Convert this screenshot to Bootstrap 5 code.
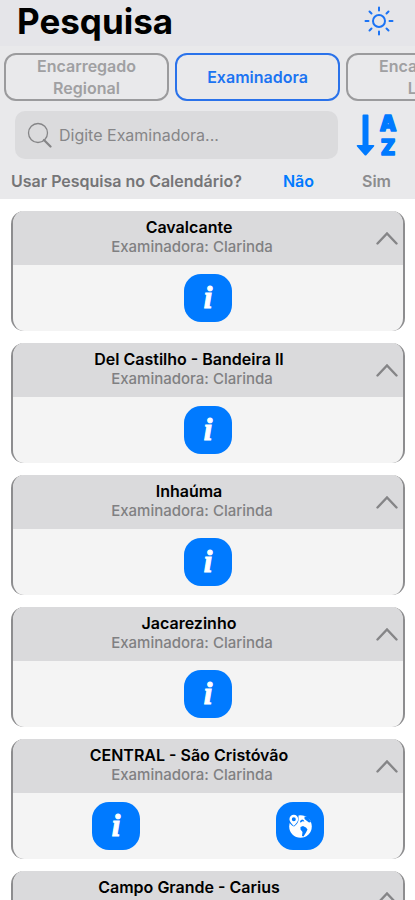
<!DOCTYPE html>
<html lang="pt-BR">
<head>
<meta charset="utf-8">
<meta name="viewport" content="width=device-width, initial-scale=1">
<title>Pesquisa</title>
<link href="https://cdn.jsdelivr.net/npm/bootstrap@5.3.0/dist/css/bootstrap.min.css" rel="stylesheet">
<style>
body { font-family: Inter, "Liberation Sans", sans-serif; background: #fff; color: #000; overflow-x: hidden; }
.app-top { background: #e9e9eb; }
.title-bar { background: #e5e5e9; height: 46px; padding: 0 20px 4px 17px; }
.title-bar h1 { font-size: 35px; line-height: 40px; font-weight: 700; }
.plain-btn { background: none; border: 0; padding: 0; display: flex; color: #007aff; }
.role-tabs { gap: 6px; padding: 7px 4px 0; overflow-x: auto; scrollbar-width: none; }
.role-tabs::-webkit-scrollbar { display: none; }
.role-tab { flex: 0 0 165px; height: 48px; border: 2px solid #9b9b9d; border-radius: 12px; background: transparent; color: #a0a0a2; font-size: 16px; line-height: 22px; font-weight: 600; padding: 0 24px; }
.role-tab.active { border-color: #2a72ea; color: #1c74f2; }
.search-row { padding: 10px 16px 0 15px; gap: 18px; }
.search-box { background: #dbdbdd; border-radius: 10px; height: 48px; padding: 0 12px; gap: 7px; }
.search-box input { border: 0; background: transparent; outline: 0; font-size: 16px; min-width: 0; padding: 0; color: #333; }
.search-box input::placeholder { color: #868688; opacity: 1; }
.calendar-row { padding: 10px 24px 6px 11px; font-size: 16px; line-height: 24px; font-weight: 600; color: #757577; }
.choice { color: #8c8c8e; cursor: pointer; }
.btn-check:checked + .choice { color: #007aff; }
.results { padding: 12px 10px 12px 11px; gap: 12px; }
.place { border: solid #8d8d8f; border-width: 0 2px; border-radius: 13px; background: #f4f4f4; overflow: hidden; }
.place-head { background: #dadadc; height: 54px; }
.place-head h2 { font-size: 16px; line-height: 20px; font-weight: 600; margin: 0; }
.place-head p { font-size: 15px; line-height: 20px; font-weight: 500; color: #808082; margin: 0; padding-left: 6px; }
.place-head-text { padding: 0 0 2px; }
.toggle { width: 38px; padding-right: 5px; justify-content: flex-end; color: #858587; }
.place-body { height: 66px; padding: 0 11px; }
.action { width: 48px; height: 48px; border: 0; border-radius: 17px; background: #007aff; color: #fff; padding: 0; }
.action svg { display: block; margin: 0 auto; }
.info-glyph { display: block; font: italic 700 31px/48px "Liberation Serif", serif; -webkit-text-stroke: 1px #fff; }
</style>
<script src="https://cdn.jsdelivr.net/npm/bootstrap@5.3.0/dist/js/bootstrap.bundle.min.js" defer></script>
</head>
<body>
<header class="app-top">
  <div class="title-bar d-flex align-items-center justify-content-between">
    <h1 class="m-0">Pesquisa</h1>
    <button class="plain-btn" type="button" aria-label="Tema claro">
      <svg width="32" height="32" viewBox="0 0 32 32" fill="none" stroke="#1b73f5" stroke-width="2" stroke-linecap="round">
        <circle cx="16" cy="16" r="6"/>
        <path d="M16 2.500v3M16 26.500v3M2.500 16h3M26.500 16h3M6.500 6.500l2 2M23.500 23.500l2 2M6.500 25.500l2-2M23.500 8.500l2-2"/>
      </svg>
    </button>
  </div>
  <nav class="role-tabs d-flex" aria-label="Tipo de pesquisa">
    <button class="role-tab" type="button">Encarregado Regional</button>
    <button class="role-tab active" type="button">Examinadora</button>
    <button class="role-tab" type="button">Encarregado Local</button>
  </nav>
  <div class="search-row d-flex align-items-center">
    <label class="search-box d-flex align-items-center flex-grow-1">
      <svg class="flex-shrink-0" width="25" height="26" viewBox="0 0 25 26" fill="none" stroke="#858587" stroke-linecap="round">
        <circle cx="11" cy="11" r="9.500" stroke-width="1.300"/>
        <path d="M17 18l6.500 6.500" stroke-width="2.200"/>
      </svg>
      <input class="flex-grow-1" type="text" placeholder="Digite Examinadora..." aria-label="Digite Examinadora">
    </label>
    <button class="plain-btn" type="button" aria-label="Ordenar de A a Z">
      <svg width="43" height="46" viewBox="0 0 43 46" fill="#007aff" overflow="visible">
        <path d="M6.500 3.500q0-1 1-1h4q1 0 1 1V33h5q1.500 0 .5 1.500l-7.500 8.500q-1 1-2 0L1 34.500Q0 33 1.500 33h5z"/>
        <g font-family="Inter, sans-serif" font-weight="900" font-size="21" text-anchor="middle" stroke="#007aff" stroke-width="1.500" stroke-linejoin="round">
          <text x="32" y="19">A</text><text x="32" y="43">Z</text>
        </g>
      </svg>
    </button>
  </div>
  <div class="calendar-row d-flex justify-content-between" role="radiogroup" aria-labelledby="cal-label">
    <span id="cal-label">Usar Pesquisa no Calendário?</span>
    <span class="d-flex gap-5">
      <span><input class="btn-check" type="radio" name="cal" id="cal-nao" checked><label class="choice" for="cal-nao">Não</label></span>
      <span><input class="btn-check" type="radio" name="cal" id="cal-sim"><label class="choice" for="cal-sim">Sim</label></span>
    </span>
  </div>
</header>
<main class="results d-flex flex-column" id="results"></main>

<template id="place-template">
  <article class="place">
    <div class="place-head d-flex">
      <div class="place-head-text flex-grow-1 text-center d-flex flex-column justify-content-center">
        <h2></h2>
        <p>Examinadora: Clarinda</p>
      </div>
      <button class="plain-btn toggle align-items-center" type="button" aria-label="Recolher">
        <svg width="22" height="14" viewBox="0 0 22 14" fill="none" stroke="currentColor" stroke-width="2.400" stroke-linecap="round"><path d="M1.500 12.500L11 2.500l9.500 10"/></svg>
      </button>
    </div>
    <div class="place-body d-flex align-items-center justify-content-around">
      <button class="action" type="button" aria-label="Informações"><span class="info-glyph">i</span></button>
      <button class="action globe" type="button" aria-label="Mapa">
        <svg width="24" height="24" viewBox="0 0 24 24">
          <circle cx="12.500" cy="12.500" r="11.300" fill="#fff"/>
          <path fill="#007aff" d="M0 0h10.500v6c0 2-2.500 5.500-4.500 6.500-3-1-6-5.500-6-7.500zM12.500 13l2.500-1 3 1.500 1.500 2-1.500 3-2.500 4-1.500-.5.5-4-2-2.500zM12 7l2-1.500 1.500.5 1 1.500-2-.3-2 1.500zM16.500 2.500l3.500.5 3 5-2 .5-2-1.500-2.500-2z"/>
          <path fill="#fff" fill-rule="evenodd" d="M5.800.8a4.400 4.400 0 0 1 4.400 4.400c0 2.600-2.500 4.600-4.400 6.800C4 9.800 1.400 7.800 1.400 5.200A4.400 4.400 0 0 1 5.800.8zm0 2.400a2 2 0 1 0 0 4 2 2 0 0 0 0-4z"/>
        </svg>
      </button>
    </div>
  </article>
</template>
<script>
const places = [
  ["Cavalcante", false],
  ["Del Castilho - Bandeira II", false],
  ["Inhaúma", false],
  ["Jacarezinho", false],
  ["CENTRAL - São Cristóvão", true],
  ["Campo Grande - Carius", false]
];
const list = document.getElementById("results");
const template = document.getElementById("place-template");
for (const [name, hasMap] of places) {
  const item = template.content.cloneNode(true);
  item.querySelector("h2").textContent = name;
  if (!hasMap) item.querySelector(".globe").remove();
  list.append(item);
}
</script>
</body>
</html>
